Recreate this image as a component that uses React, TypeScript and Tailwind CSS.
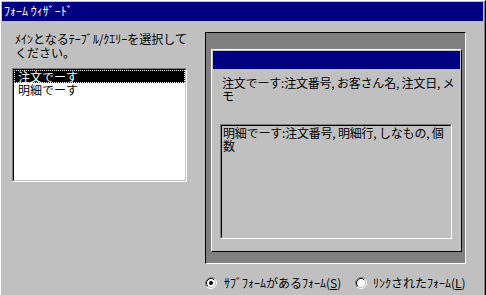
import React from "react";

function Radio({ checked }: { checked: boolean }) {
  return (
    <svg width="12" height="12" viewBox="0 0 12 12" className="shrink-0">
      <circle cx="6" cy="6" r="4.5" fill="#ffffff" />
      <path d="M2.11 9.89 A5.5 5.5 0 0 1 9.89 2.11" fill="none" stroke="#808080" strokeWidth="1" />
      <path d="M2.82 9.18 A4.5 4.5 0 0 1 9.18 2.82" fill="none" stroke="#000000" strokeWidth="1" />
      <path d="M9.89 2.11 A5.5 5.5 0 0 1 2.11 9.89" fill="none" stroke="#ffffff" strokeWidth="1" />
      <path d="M9.18 2.82 A4.5 4.5 0 0 1 2.82 9.18" fill="none" stroke="#c0c0c0" strokeWidth="1" />
      {checked && <circle cx="6" cy="6" r="2" fill="#000000" />}
    </svg>
  );
}

export default function App() {
  return (
    <div className="w-[486px] h-[295px] overflow-hidden bg-[#c0c0c0] border-l border-t border-r border-l-white border-t-white border-r-black font-['Noto_Sans_CJK_JP','Noto_Sans',sans-serif] text-[12px] text-black">
      <div className="h-full border-r border-r-[#808080] flex flex-col">
        {/* Title bar */}
        <div className="mx-[1px] mt-[1px] h-[19px] bg-[#000080] text-white leading-[14px] pl-[2px] pt-[2px] whitespace-nowrap">
          ﾌｫｰﾑ ｳｨｻﾞｰﾄﾞ
        </div>

        {/* Content */}
        <div className="flex pt-[11px] pl-[11px]">
          {/* Left column */}
          <div className="w-[175px] flex flex-col">
            <div className="ml-[3px] leading-[14px] whitespace-nowrap">
              ﾒｲﾝとなるﾃｰﾌﾞﾙ/ｸｴﾘｰを選択して
              <br />
              ください。
            </div>
            <div className="mt-[8px] h-[114px] border border-t-[#808080] border-l-[#808080] border-r-white border-b-white">
              <div className="h-full border border-t-black border-l-black border-r-[#c0c0c0] border-b-[#c0c0c0] bg-white flex flex-col">
                <div className="h-[13px] bg-black text-white border border-dotted border-white pl-[3px] leading-[11px] whitespace-nowrap">
                  注文でーす
                </div>
                <div className="h-[13px] pl-[4px] leading-[13px] whitespace-nowrap">明細でーす</div>
              </div>
            </div>
          </div>

          {/* Right preview panel */}
          <div className="ml-[18px] w-[261px] h-[232px] border border-t-black border-l-black border-r-white border-b-white bg-[#808080] pl-[5px] pt-[16px]">
            <div className="w-[251px] h-[203px] border border-t-white border-l-white border-r-black border-b-black bg-[#c0c0c0] p-[1px] flex flex-col">
              <div className="h-[18px] bg-[#000080]" />
              <div className="ml-[9px] mt-[7px] leading-[13px] tracking-[-0.2px] whitespace-nowrap">
                注文でーす:注文番号, お客さん名, 注文日, メ
                <br />
                モ
              </div>
              <div className="ml-[7px] mt-[22px] w-[232px] h-[115px] border border-t-[#808080] border-l-[#808080] border-r-white border-b-white">
                <div className="h-full border border-t-black border-l-black border-r-[#c0c0c0] border-b-[#c0c0c0] pl-[1px] leading-[13px] tracking-[-0.2px] whitespace-nowrap">
                  明細でーす:注文番号, 明細行, しなもの, 個
                  <br />
                  数
                </div>
              </div>
            </div>
          </div>
        </div>

        {/* Radio row */}
        <div className="flex items-center mt-[12px] pl-[204px] h-[14px] leading-[14px] whitespace-nowrap">
          <div className="w-[150px] flex items-center gap-[7px]">
            <Radio checked={true} />
            <span>
              ｻﾌﾞﾌｫｰﾑがあるﾌｫｰﾑ(<span className="underline">S</span>)
            </span>
          </div>
          <div className="flex items-center gap-[6px]">
            <Radio checked={false} />
            <span>
              ﾘﾝｸされたﾌｫｰﾑ(<span className="underline">L</span>)
            </span>
          </div>
        </div>
      </div>
    </div>
  );
}
